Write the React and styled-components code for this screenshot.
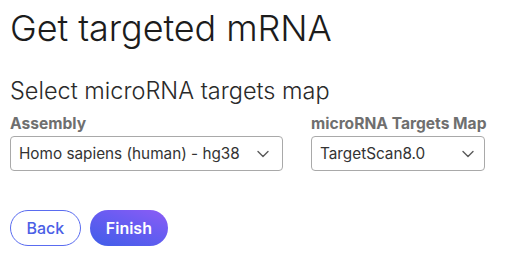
import React from "react";
import styled, { createGlobalStyle } from "styled-components";

const Global = createGlobalStyle`
  html, body { margin: 0; padding: 0; background: #fff; }
  body { font-family: Inter, "Noto Sans", sans-serif; color: #1f1f1f; }
`;

const Page = styled.div`
  padding: 6px 10px 0 10px;
  display: flex;
  flex-direction: column;
`;

const Title = styled.h1`
  margin: 0;
  font-size: 36px;
  font-weight: 300;
  line-height: 44px;
  letter-spacing: -0.08px;
  color: #1c1c1c;
`;

const Subtitle = styled.h2`
  margin: 26px 0 0 0;
  font-size: 23.5px;
  font-weight: 300;
  line-height: 30px;
  color: #2a2a2a;
`;

const Fields = styled.div`
  display: flex;
  gap: 28px;
  margin-top: 8px;
`;

const Field = styled.div`
  display: flex;
  flex-direction: column;
  gap: 2px;
  width: ${(p) => p.$w}px;
`;

const Label = styled.label`
  font-size: 15.6px;
  font-weight: 700;
  color: #6f6f6f;
  line-height: 20px;
  white-space: nowrap;
`;

const Select = styled.div`
  box-sizing: border-box;
  height: 35px;
  border: 1px solid #a9a9a9;
  border-radius: 4px;
  display: flex;
  align-items: center;
  justify-content: space-between;
  padding: 0 ${(p) => p.$pr}px 0 8px;
  font-size: 15.3px;
  color: #333;
`;

const Buttons = styled.div`
  display: flex;
  gap: 9px;
  margin-top: 39px;
`;

const Button = styled.button`
  box-sizing: border-box;
  height: 36px;
  padding: 0 ${(p) => (p.$primary ? 16 : 15.5)}px;
  border-radius: 18px;
  font-family: Inter, sans-serif;
  font-size: 16px;
  font-weight: ${(p) => (p.$primary ? 600 : 500)};
  cursor: pointer;
  border: ${(p) => (p.$primary ? "none" : "1px solid #5a6cf0")};
  color: ${(p) => (p.$primary ? "#fff" : "#4b5fe6")};
  background: ${(p) =>
    p.$primary ? "linear-gradient(20deg, #3f5ee8 0%, #6b5cf2 60%, #8d5cf5 100%)" : "#fff"};
`;

const Chevron = () => (
  <svg width="12" height="8" viewBox="0 0 12 8" fill="none">
    <path d="M1 1.5l5 5 5-5" stroke="#5a5a5a" strokeWidth="1.4" strokeLinecap="round" strokeLinejoin="round" />
  </svg>
);

export default function App() {
  return (
    <>
      <Global />
      <Page>
        <Title>Get targeted mRNA</Title>
        <Subtitle>Select microRNA targets map</Subtitle>
        <Fields>
          <Field $w={273}>
            <Label>Assembly</Label>
            <Select $pr={13}>
              <span>Homo sapiens (human) - hg38</span>
              <Chevron />
            </Select>
          </Field>
          <Field $w={174}>
            <Label>microRNA Targets Map</Label>
            <Select $pr={10}>
              <span>TargetScan8.0</span>
              <Chevron />
            </Select>
          </Field>
        </Fields>
        <Buttons>
          <Button>Back</Button>
          <Button $primary>Finish</Button>
        </Buttons>
      </Page>
    </>
  );
}
